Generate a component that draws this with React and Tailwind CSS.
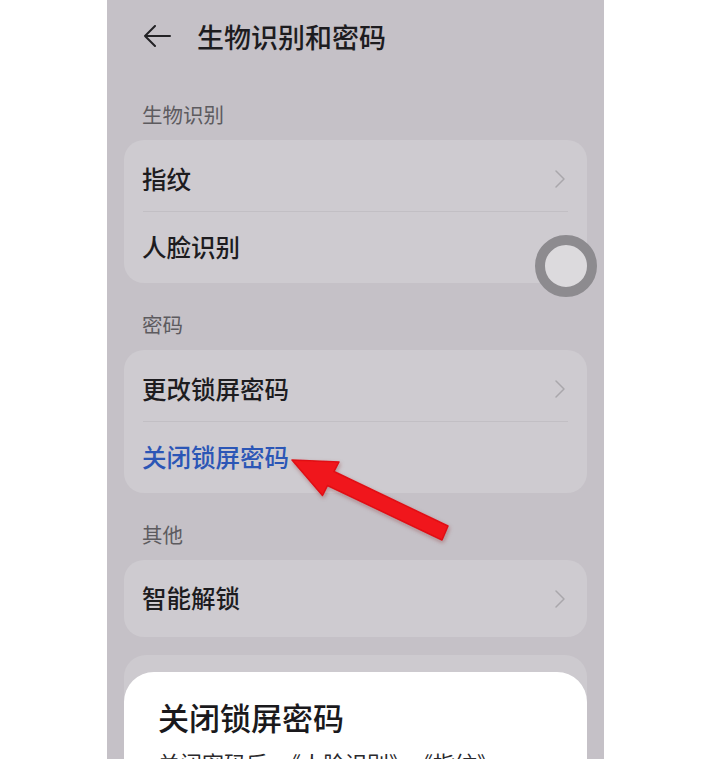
import React from 'react';

const font = { fontFamily: '"Noto Sans CJK SC", "Noto Sans", sans-serif' };

function Chevron() {
    return (
        <svg width="12" height="20" viewBox="0 0 12 20" className="shrink-0">
            <polyline points="2,2 10,10 2,18" fill="none" stroke="#a9a7ab" strokeWidth="1.5" strokeLinecap="round" strokeLinejoin="round" />
        </svg>
    );
}

function Row({ label, blue, chevron, h = 'h-[71px]', first }) {
    return (
        <div className={`flex items-center justify-between pl-[18px] pr-[21px] ${h} ${first ? 'pt-[7px]' : ''}`}>
            <span className={`text-[24.5px] leading-none font-medium ${blue ? 'text-[#2b56b6]' : 'text-[#1d1c1f]'}`}>{label}</span>
            {chevron && <Chevron />}
        </div>
    );
}

function Divider() {
    return <div className="mx-[19px] h-px bg-[#c2bfc4]" />;
}

function Label({ children, h = 'h-[67px]' }) {
    return (
        <div className={`${h} flex items-end pl-[35px] pb-[12px]`}>
            <span className="text-[20.5px] leading-[28px] text-[#5d5b5f]">{children}</span>
        </div>
    );
}

export default function App() {
    return (
        <div className="relative w-[712px] h-[759px] bg-white overflow-hidden" style={font}>
            <div className="relative ml-[107px] w-[497px] h-[759px] bg-[#c5c1c7] overflow-hidden">
                {/* 顶部 */}
                <div className="h-[72px] flex items-center pl-[36px]">
                    <svg width="28" height="22" viewBox="0 0 28 22">
                        <path d="M27 11H2M12 1L2 11l10 10" fill="none" stroke="#232225" strokeWidth="2" strokeLinecap="round" strokeLinejoin="round" />
                    </svg>
                    <span className="ml-[26px] text-[27px] leading-none text-[#1d1c1f] font-medium">生物识别和密码</span>
                </div>

                <Label h="h-[68px]">生物识别</Label>
                <div className="mx-[17px] rounded-[20px] bg-[#cecbd0]">
                    <Row label="指纹" chevron first />
                    <Divider />
                    <Row label="人脸识别" />
                </div>

                <Label>密码</Label>
                <div className="mx-[17px] rounded-[20px] bg-[#cecbd0]">
                    <Row label="更改锁屏密码" chevron first />
                    <Divider />
                    <Row label="关闭锁屏密码" blue />
                </div>

                <Label>其他</Label>
                <div className="mx-[17px] rounded-[20px] bg-[#cecbd0]">
                    <Row label="智能解锁" chevron h="h-[77px]" />
                </div>

                {/* 底部弹层 */}
                <div className="mt-[18px] mx-[17px] rounded-t-[22px] bg-[#cdcacf] pt-[17px]">
                    <div className="rounded-t-[30px] bg-white h-[120px] pl-[34px] pt-[27px]">
                        <div className="text-[31px] leading-[36px] text-[#1a191c] font-medium">关闭锁屏密码</div>
                        <div className="mt-[14px] text-[22px] leading-[26px] text-[#2a292c]">关闭密码后，《人脸识别》、《指纹》</div>
                    </div>
                </div>

                {/* 悬浮球 */}
                <div className="absolute left-[428px] top-[235px] w-[62px] h-[62px] rounded-full border-[10px] border-[#8d8b8f] bg-[#dcdadd]" />
            </div>

            {/* 红色箭头 */}
            <svg className="absolute left-0 top-0 pointer-events-none" width="712" height="759" viewBox="0 0 712 759">
                <defs>
                    <filter id="sh" x="-20%" y="-20%" width="140%" height="140%">
                        <feDropShadow dx="1" dy="2" stdDeviation="2" floodColor="#7a2020" floodOpacity="0.35" />
                    </filter>
                </defs>
                <polygon
                    points="292,460 339,462 334,471.5 448,526 442,540 327.5,485.5 322.5,495.5"
                    fill="#f0161a"
                    stroke="#e01014"
                    strokeWidth="1.5"
                    strokeLinejoin="round"
                    filter="url(#sh)"
                />
            </svg>
        </div>
    );
}
